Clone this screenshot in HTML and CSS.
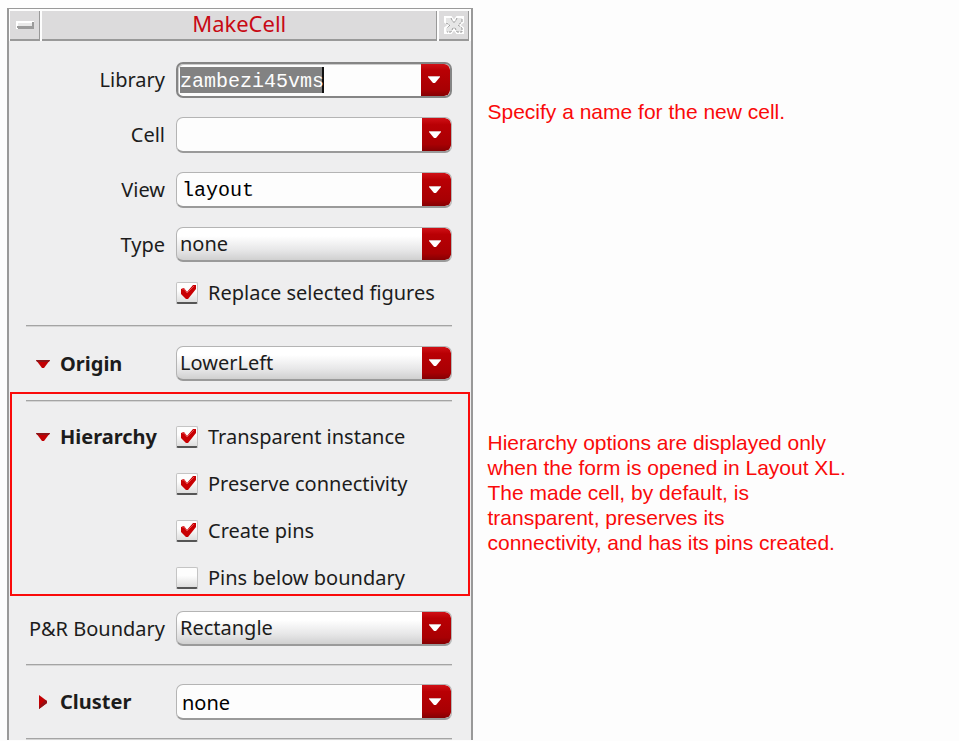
FILE: index.html
```
<!DOCTYPE html>
<html lang="en">
<head>
<meta charset="utf-8">
<meta name="viewport" content="width=device-width, initial-scale=1">
<title>MakeCell</title>
<link rel="stylesheet" href="styles.css">
</head>
<body>
<svg class="sprite" aria-hidden="true">
  <symbol id="arrow" viewBox="0 0 12 7"><path d="M0 0h12v1L7 7H5L0 1z" fill="#fff"/><path d="M0 0h12v1H0z" fill="#dcb4b4"/></symbol>
  <symbol id="check" viewBox="0 0 16 14"><path d="M1 4l3-1 3 4 6-7 3 0v4L8 14H6L1 9z" fill="#c80003"/><path d="M2 4l2 0 3 4 7-7" fill="none" stroke="#e8474a"/></symbol>
  <symbol id="open" viewBox="0 0 14 8"><path d="M0 0h14L8 8H6z" fill="#c20003"/><path d="M0 0h14l-1 2H1z" fill="#8e1518"/></symbol>
  <symbol id="closed" viewBox="0 0 8 14"><path d="M0 0l8 6v2l-8 6z" fill="#c20003"/><path d="M6 5l2 1v2L0 14v-2z" fill="#941014"/></symbol>
</svg>
<main class="page">
  <section class="window" aria-labelledby="title">
    <header class="titlebar">
      <button class="cap" type="button" aria-label="Minimize">
        <svg width="18" height="8" viewBox="0 0 18 8"><path d="M0 0h18v8H0z" fill="#fff"/><path d="M2 7V8H18V1H16V5H1V7z" fill="#9b9b9b"/><path d="M2 2h14v3H2z" fill="#e9e9e9"/></svg>
      </button>
      <h1 class="title" id="title">MakeCell</h1>
      <button class="cap" type="button" aria-label="Close">
        <svg width="20" height="18" viewBox="0 0 20 18" fill="none"><path d="M1 1h6l3 4 3-4h6v5l-4 3 4 3v5h-6l-3-4-3 4H1v-5l4-3-4-3z" fill="#e6e6e6" stroke="#fff" stroke-width="2"/><path d="M7 2l2 4h2l2-4M18 3v3l-4 3 4 3v4h-5l-2-4H9l-2 4H3M2 7l4 2-3 3" stroke="#999" stroke-dasharray="3 1"/></svg>
      </button>
    </header>
    <form class="form">
      <div class="group first">
        <div class="row">
          <label class="label" for="library">Library</label>
          <div class="combo focused"><input class="entry marked" id="library" type="text" value="zambezi45vms"><button class="drop" type="button" aria-label="Library list"><svg class="arrow"><use href="#arrow"/></svg></button></div>
        </div>
        <div class="row">
          <label class="label" for="cell">Cell</label>
          <div class="combo"><input class="entry" id="cell" type="text"><button class="drop" type="button" aria-label="Cell list"><svg class="arrow"><use href="#arrow"/></svg></button></div>
        </div>
        <div class="row">
          <label class="label" for="view">View</label>
          <div class="combo"><input class="entry" id="view" type="text" value="layout"><button class="drop" type="button" aria-label="View list"><svg class="arrow"><use href="#arrow"/></svg></button></div>
        </div>
        <div class="row">
          <label class="label" for="type">Type</label>
          <div class="combo picker"><select class="choice" id="type"><option>none</option></select><span class="drop"><svg class="arrow"><use href="#arrow"/></svg></span></div>
        </div>
        <label class="tick"><span class="box"><input type="checkbox" checked><svg class="mark"><use href="#check"/></svg></span>Replace selected figures</label>
      </div>
      <div class="group">
        <hr class="rule">
        <div class="row">
          <button class="toggle" type="button" aria-expanded="true"><svg class="open"><use href="#open"/></svg>Origin</button>
          <div class="combo picker"><select class="choice" aria-label="Origin"><option>LowerLeft</option></select><span class="drop"><svg class="arrow"><use href="#arrow"/></svg></span></div>
        </div>
      </div>
      <div class="group outlined">
        <hr class="rule">
        <div class="row">
          <button class="toggle" type="button" aria-expanded="true"><svg class="open"><use href="#open"/></svg>Hierarchy</button>
          <div class="ticks">
            <label class="tick"><span class="box"><input type="checkbox" checked><svg class="mark"><use href="#check"/></svg></span>Transparent instance</label>
            <label class="tick"><span class="box"><input type="checkbox" checked><svg class="mark"><use href="#check"/></svg></span>Preserve connectivity</label>
            <label class="tick"><span class="box"><input type="checkbox" checked><svg class="mark"><use href="#check"/></svg></span>Create pins</label>
            <label class="tick"><span class="box"><input type="checkbox"><svg class="mark"><use href="#check"/></svg></span>Pins below boundary</label>
          </div>
        </div>
      </div>
      <div class="group last">
        <div class="row">
          <label class="label" for="boundary">P&amp;R Boundary</label>
          <div class="combo picker"><select class="choice" id="boundary"><option>Rectangle</option></select><span class="drop"><svg class="arrow"><use href="#arrow"/></svg></span></div>
        </div>
        <hr class="rule">
        <div class="row">
          <button class="toggle" type="button" aria-expanded="false"><svg class="closed"><use href="#closed"/></svg>Cluster</button>
          <div class="combo"><input class="entry sans" type="text" value="none" aria-label="Cluster"><button class="drop" type="button" aria-label="Cluster list"><svg class="arrow"><use href="#arrow"/></svg></button></div>
        </div>
        <hr class="rule">
      </div>
    </form>
  </section>
  <aside class="notes">
    <p>Specify a name for the new cell.</p>
    <p>Hierarchy options are displayed only<br>when the form is opened in Layout XL.<br>The made cell, by default, is<br>transparent, preserves its<br>connectivity, and has its pins created.</p>
  </aside>
</main>
</body>
</html>
```
FILE: styles.css
```
* { box-sizing: border-box; }

body {
  margin: 0;
  background: #fdfdfd;
  color: #1c1c1c;
  font: 20px/24px "Noto Sans", sans-serif;
}

button, input, select { margin: 0; font: inherit; color: inherit; }
button { padding: 0; border: 0; background: none; }

.sprite { position: absolute; width: 0; height: 0; }

.page {
  display: grid;
  grid-template-columns: minmax(440px, 49fr) 51fr;
  padding: 8px 0 0 7px;
}

.window {
  border: solid #999;
  border-width: 1px 2px 0;
  background: #eeeeef;
}

.titlebar {
  display: flex;
  gap: 2px;
  padding: 2px 2px 0 1px;
  background: #fdfdfd;
}

.cap, .title {
  height: 30px;
  border: solid #999;
  border-width: 0 1px 2px 0;
  background: #dcdbdc;
}

.cap {
  display: grid;
  place-items: center;
  width: 30px;
}

.title {
  flex: 1;
  margin: 0;
  color: #c80a14;
  font-size: 22px;
  font-weight: 400;
  line-height: 24px;
  text-align: center;
}

.group {
  display: grid;
  gap: 19px;
  padding: 0 19px 0 17px;
}

.first { padding-top: 21px; padding-bottom: 20px; }

.outlined {
  gap: 23px;
  margin: 11px 1px 15px;
  padding: 6px 16px 4px 14px;
  border: 2px solid #fa0a0a;
}

.last { gap: 18px; }

.row {
  display: grid;
  grid-template-columns: 139px minmax(0, 1fr);
  gap: 11px;
  align-items: center;
}

.outlined .row { align-items: start; }

.label { text-align: right; white-space: nowrap; }

.rule {
  width: 100%;
  height: 2px;
  margin: 0;
  border: 0;
  border-top: 1px solid #a4a4a4;
  background: #d4d4d4;
}

.combo {
  display: flex;
  height: 36px;
  overflow: hidden;
  border: 1px solid #b4b4b4;
  border-bottom: 2px solid #9a9a9a;
  border-radius: 7px;
  background: #fdfdfd;
}

.focused { border: 2px solid #858585; box-shadow: inset 1px 1px #ccc; }

.picker {
  height: 35px;
  background: linear-gradient(#fff 25%, #e6e6e7 70%, #d0d0d0);
}

.entry, .choice {
  flex: 1;
  min-width: 0;
  border: 0;
  outline: 0;
  background: none;
}

.entry {
  padding: 3px 5px 0;
  color: #000;
  font-family: "Liberation Mono", monospace;
}

.sans { font-family: "Noto Sans", sans-serif; }

.marked {
  padding-left: 2px;
  color: #fdfdfd;
  background: linear-gradient(90deg, #828282 142px, #111 142px) no-repeat 2px 3px / 144px 26px;
}

.choice {
  padding: 0 3px 1px;
  appearance: none;
}

.drop {
  display: grid;
  place-items: center;
  width: 29px;
  padding: 0 3px 1px 0;
  border-radius: 0 6px 6px 0;
  background: linear-gradient(#d01016, #b90004 20%, #a80003 80%, #850003);
  pointer-events: none;
}

.arrow { width: 12px; height: 7px; }

.tick {
  display: flex;
  align-items: center;
  gap: 10px;
  height: 24px;
  white-space: nowrap;
}

.first .tick { margin-left: 150px; }

.ticks { display: grid; gap: 23px; }

.box { position: relative; width: 22px; height: 22px; }

.box input {
  display: block;
  width: 22px;
  height: 22px;
  border: 1px solid #c4c4c4;
  border-bottom: 2px solid #555;
  border-radius: 2px;
  background: linear-gradient(#fdfdfd 40%, #dedede);
  appearance: none;
}

.mark {
  position: absolute;
  top: 3px;
  left: 4px;
  display: none;
  width: 16px;
  height: 14px;
  pointer-events: none;
}

.box input:checked + .mark { display: block; }

.toggle {
  display: flex;
  align-items: center;
  gap: 10px;
  padding-left: 10px;
  font-weight: 700;
  line-height: 24px;
}

.open { width: 14px; height: 8px; }
.closed { width: 8px; height: 14px; margin: 0 3px; }

.notes {
  padding: 91px 0 0 14px;
  color: #fa0a0a;
  font: 21px/25px "Liberation Sans", Arial, sans-serif;
}

.notes p { margin: 0 0 306px; }
.notes p:last-child { margin: 0; }
```
